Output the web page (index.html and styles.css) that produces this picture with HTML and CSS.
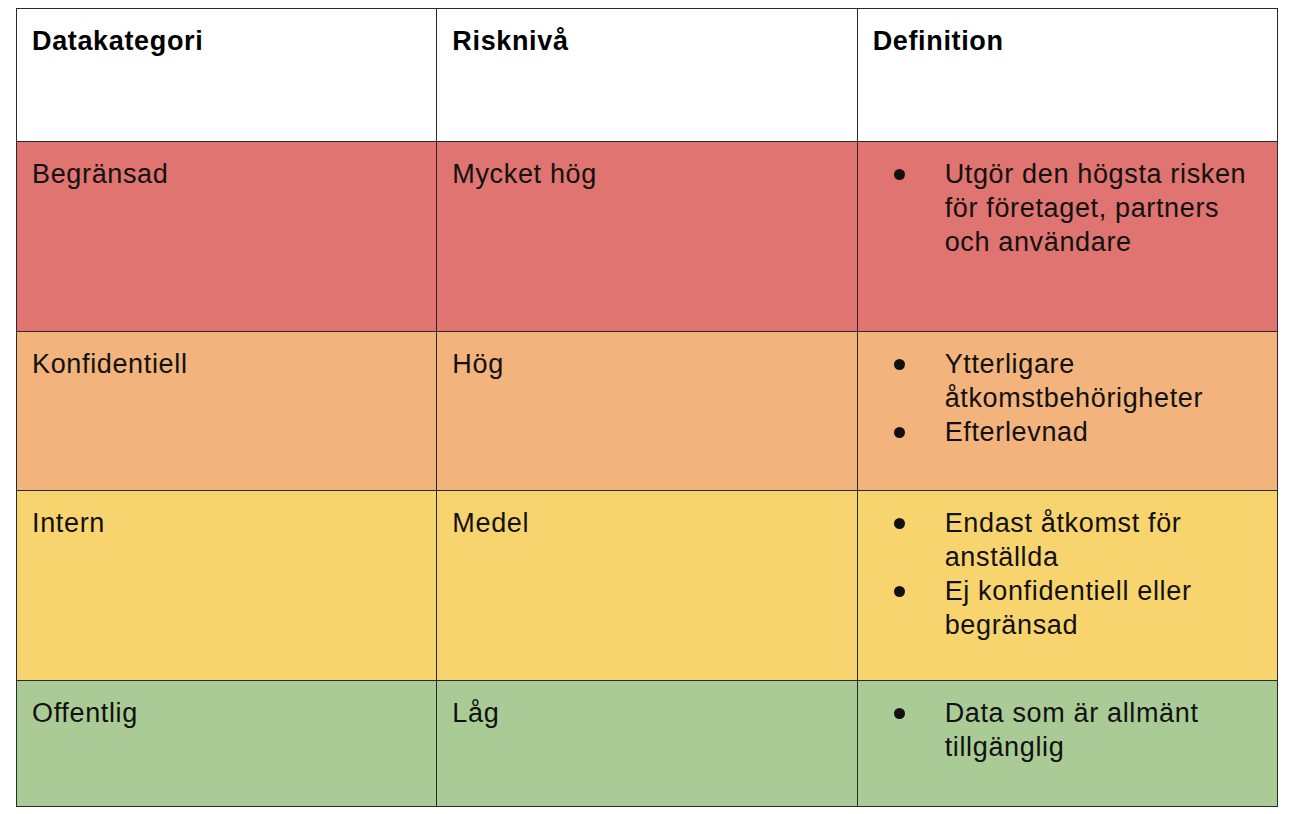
FILE: index.html
```html
<!DOCTYPE html>
<html lang="sv">
<head>
<meta charset="utf-8">
<link rel="stylesheet" href="styles.css">
</head>
<body>
<table class="risk-table">
  <colgroup><col class="c"><col class="c"><col class="c"></colgroup>
  <tr class="row head">
    <th>Datakategori</th><th>Risknivå</th><th>Definition</th>
  </tr>
  <tr class="row red tall">
    <td>Begränsad</td><td>Mycket hög</td>
    <td><ul class="bullets"><li>Utgör den högsta risken för företaget, partners och användare</li></ul></td>
  </tr>
  <tr class="row orange mid">
    <td>Konfidentiell</td><td>Hög</td>
    <td><ul class="bullets"><li>Ytterligare åtkomstbehörigheter</li><li>Efterlevnad</li></ul></td>
  </tr>
  <tr class="row yellow tall">
    <td>Intern</td><td>Medel</td>
    <td><ul class="bullets"><li>Endast åtkomst för anställda</li><li>Ej konfidentiell eller begränsad</li></ul></td>
  </tr>
  <tr class="row green short">
    <td>Offentlig</td><td>Låg</td>
    <td><ul class="bullets"><li>Data som är allmänt tillgänglig</li></ul></td>
  </tr>
</table>
</body>
</html>
```
FILE: styles.css
```css
html, body { margin: 0; padding: 0; background: #fff; }
body { padding: 8px 0 0 16px; font-family: "Liberation Sans", Arial, sans-serif; color: #111; }
.risk-table {
  border-collapse: collapse;
  table-layout: fixed;
  width: 1262px;
  font-size: 27px;
  letter-spacing: 0.65px;
  line-height: 34px;
}
.risk-table .c { width: 420px; }
.risk-table th, .risk-table td {
  border: 1.5px solid #2a2a2a;
  vertical-align: top;
  text-align: left;
  padding: 15px 14px 0 15px;
}
.risk-table th { font-weight: bold; color: #000; }
.head { height: 133px; background: #fff; }
.tall { height: 190px; }
.mid { height: 159px; }
.short { height: 126px; }
.red { background: #df7470; }
.orange { background: #f2b37c; }
.yellow { background: #f8d46e; }
.green { background: #aacb95; }
.bullets { margin: 0; padding: 0 0 0 72px; list-style: none; }
.bullets li { position: relative; }
.bullets li::before {
  content: "";
  position: absolute;
  left: -51px;
  top: 12px;
  width: 11px;
  height: 11px;
  border-radius: 50%;
  background: #111;
}
```
